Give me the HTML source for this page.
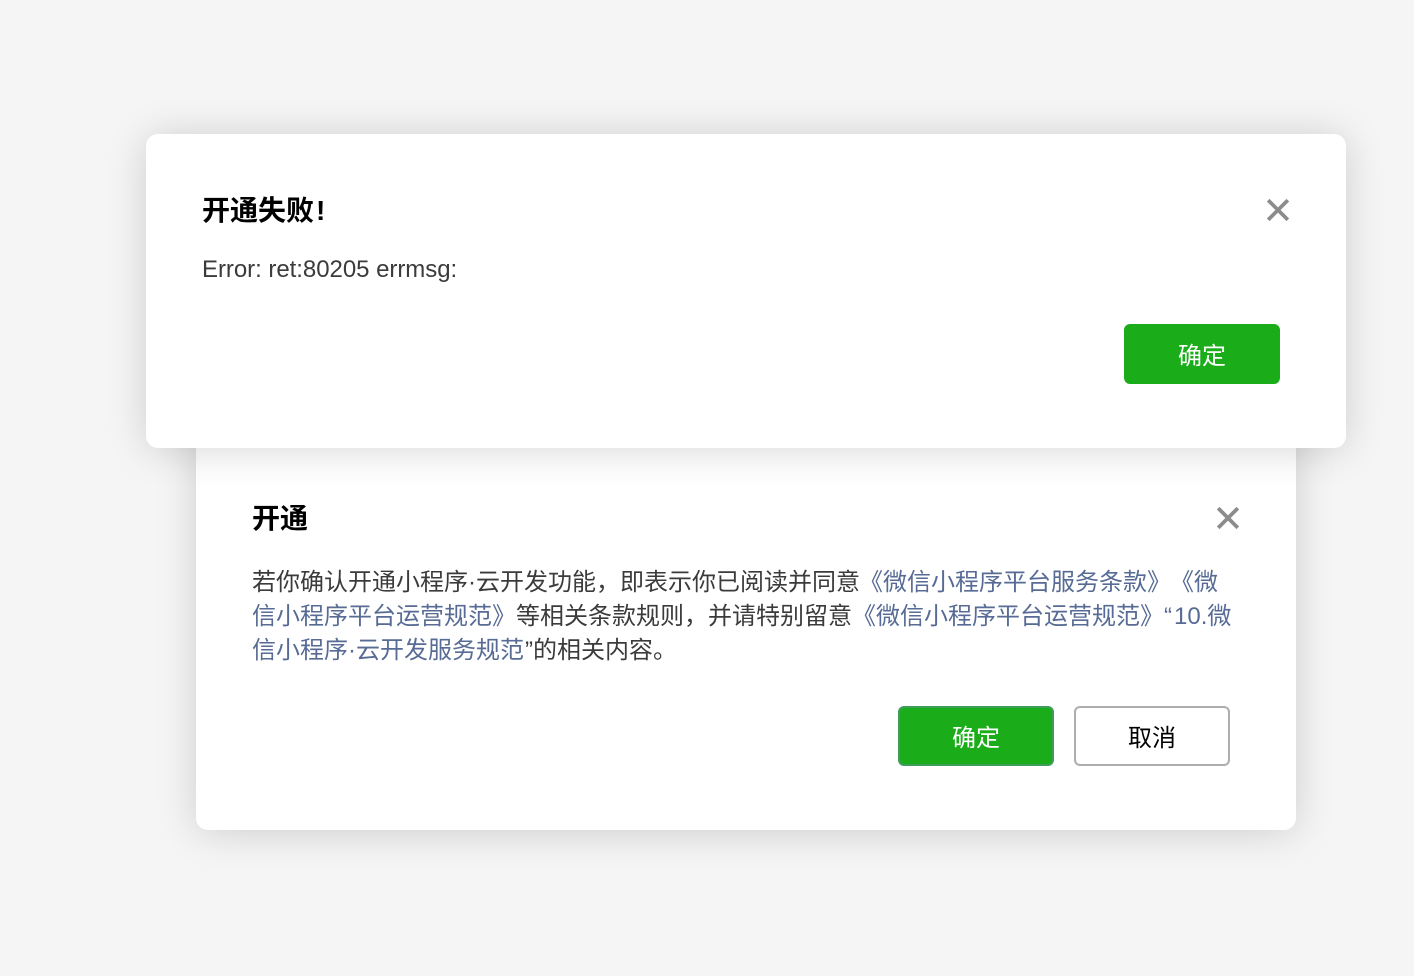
<!DOCTYPE html>
<html lang="zh-CN">
<head>
<meta charset="utf-8">
<title>开通</title>
<style>
html,body{margin:0;padding:0;width:1414px;height:976px;overflow:hidden;background:#f5f5f5}
body{position:relative;font-family:"Liberation Sans","Noto Sans CJK SC",sans-serif;color:#353535;text-spacing-trim:space-all;font-feature-settings:"chws" 0,"palt" 0,"halt" 0;font-kerning:none}
.card{position:absolute;background:#fff;border-radius:12px;box-shadow:0 2px 40px rgba(0,0,0,.16)}
.abs{position:absolute;white-space:nowrap}
.title{font-size:28px;font-weight:700;color:#000;line-height:40px}
.txt{font-size:24px;line-height:34px;color:#3b3b3b}
a{color:#576b95;text-decoration:none}
.btn{position:absolute;box-sizing:border-box;width:156px;height:60px;border-radius:6px;font-size:24px;line-height:58px;text-align:center}
.btn span{position:relative;top:2px}
.pri{background:#1aad19;color:#fff;border:2px solid #1aad19}
.pri2{border-color:#3f9c5c}
.def{background:#fff;color:#000;border:2px solid #adadad}
svg{position:absolute;display:block}
</style>
</head>
<body>
<div class="card" style="left:196px;top:200px;width:1100px;height:630px"></div>
<div class="abs title" style="left:252px;top:499px">开通</div>
<svg style="left:1216px;top:506px" width="24" height="24" viewBox="0 0 24 24"><path d="M2.2 2.2L21.8 21.8M21.8 2.2L2.2 21.8" stroke="#8c8c8c" stroke-width="3.8" fill="none"/></svg>
<div class="abs txt" style="left:252px;top:566px">若你确认开通小程序·云开发功能&#xFF0C;即表示你已阅读并同意<a style="margin-left:-1px">《微信小程序平台服务条款》<span style="margin-left:-1px">《微</span></a></div>
<div class="abs txt" style="left:252px;top:600px"><a>信小程序平台运营规范》</a>等相关条款规则&#xFF0C;并请特别留意<a>《微信小程序平台运营规范》“<span style="margin-left:2px">10.</span>微</a></div>
<div class="abs txt" style="left:252px;top:634px"><a>信小程序·云开发服务规范</a><span style="margin-left:1px">”的相关内容。</span></div>
<div class="btn pri pri2" style="left:898px;top:706px"><span>确定</span></div>
<div class="btn def" style="left:1074px;top:706px"><span>取消</span></div>

<div class="card" style="left:146px;top:134px;width:1200px;height:314px"></div>
<div class="abs title" style="left:202px;top:191px">开通失败<span style="margin-left:2px">!</span></div>
<svg style="left:1266px;top:198px" width="24" height="24" viewBox="0 0 24 24"><path d="M2.2 2.2L21.8 21.8M21.8 2.2L2.2 21.8" stroke="#8c8c8c" stroke-width="3.8" fill="none"/></svg>
<div class="abs txt" style="left:202px;top:253px;letter-spacing:-.04px">Error: ret:80205 errmsg:</div>
<div class="btn pri" style="left:1124px;top:324px"><span>确定</span></div>
</body>
</html>
